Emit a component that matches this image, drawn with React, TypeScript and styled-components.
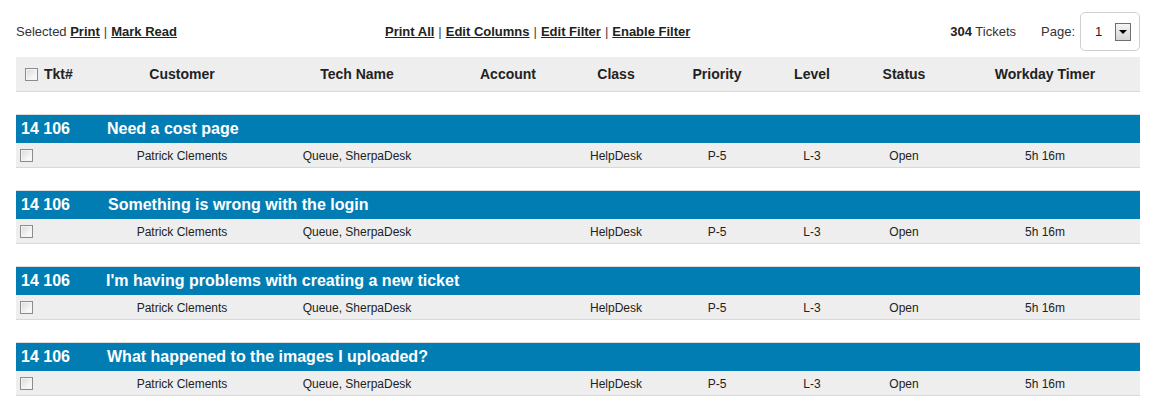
import React from "react";
import styled, { createGlobalStyle } from "styled-components";

const GlobalStyle = createGlobalStyle`
  html, body { margin: 0; padding: 0; background: #fff; }
  body { font-family: "Liberation Sans", Arial, sans-serif; color: #333; }
`;

const Page = styled.div`
  width: 1124px;
  padding: 12px 15px 0 16px;
`;

const TopBar = styled.div`
  display: grid;
  grid-template-columns: 369px auto 1fr;
  align-items: center;
  height: 39px;
  margin-bottom: 6px;
  font-size: 13px;
`;

const Actions = styled.div`
  color: #333;
  white-space: nowrap;
`;

const Link = styled.a`
  color: #222;
  font-weight: bold;
  text-decoration: underline;
  cursor: pointer;
`;

const Sep = styled.span`
  margin: 0 4px;
  color: #444;
`;

const RightBox = styled.div`
  display: flex;
  justify-content: flex-end;
  align-items: center;
`;

const Count = styled.span`
  color: #333;
  margin-right: 25px;
  b { color: #222; }
`;

const PageLabel = styled.span`
  color: #333;
  margin-right: 5px;
`;

const Select = styled.div`
  box-sizing: border-box;
  width: 60px;
  height: 39px;
  border: 1px solid #cfcfcf;
  border-radius: 5px;
  display: flex;
  align-items: center;
  padding-left: 14px;
  color: #222;
`;

const Drop = styled.span`
  box-sizing: border-box;
  margin-left: 13px;
  width: 16px;
  height: 18px;
  border: 1px solid #6f6f6f;
  background: linear-gradient(#f4f4f4, #d6d6d6);
  display: flex;
  align-items: center;
  justify-content: center;
  &::after {
    content: "";
    border-left: 4px solid transparent;
    border-right: 4px solid transparent;
    border-top: 4px solid #000;
  }
`;

const COLS = "86px 160px 190px 112px 104px 98px 92px 92px 190px";

const Header = styled.div`
  display: grid;
  grid-template-columns: ${COLS};
  height: 34px;
  align-items: center;
  background: #eeeeee;
  border-bottom: 1px solid #d8d8d8;
  font-size: 14px;
  font-weight: bold;
  color: #222;
`;

const HeadCell = styled.div<{ $left?: boolean }>`
  display: flex;
  align-items: center;
  justify-content: ${(p) => (p.$left ? "flex-start" : "center")};
  padding-left: ${(p) => (p.$left ? "9px" : "0")};
  gap: 6px;
  white-space: nowrap;
`;

const Check = styled.span`
  box-sizing: border-box;
  display: inline-block;
  width: 13px;
  height: 13px;
  border: 1px solid #8c8c8c;
  background: linear-gradient(135deg, #d8d8d8 0%, #f2f2f2 60%, #ffffff 100%);
  box-shadow: inset 0 0 0 1px #f4f4f4;
`;

const Ticket = styled.div`
  margin-top: 22px;
  border-top: 1px solid #dcdcdc;
  border-bottom: 1px solid #d8d8d8;
`;

const TitleBar = styled.div`
  display: grid;
  grid-template-columns: 86px 1fr;
  align-items: center;
  height: 28px;
  background: #027db4;
  color: #fff;
  font-size: 16px;
  font-weight: bold;
`;

const TitleCell = styled.div<{ $pad: number }>`
  padding-left: ${(p) => p.$pad}px;
  white-space: nowrap;
`;

const DetailRow = styled.div`
  display: grid;
  grid-template-columns: ${COLS};
  align-items: center;
  height: 24px;
  background: #eeeeee;
  font-size: 12px;
  color: #222;
`;

const Cell = styled.div<{ $left?: boolean }>`
  display: flex;
  align-items: center;
  justify-content: ${(p) => (p.$left ? "flex-start" : "center")};
  padding-left: ${(p) => (p.$left ? "4px" : "0")};
  padding-top: 1px;
  white-space: nowrap;
`;

const headers = ["Customer", "Tech Name", "Account", "Class", "Priority", "Level", "Status", "Workday Timer"];

const tickets = [
  { id: "14 106", title: "Need a cost page", pad: 5 },
  { id: "14 106", title: "Something is wrong with the login", pad: 6 },
  { id: "14 106", title: "I'm having problems with creating a new ticket", pad: 4 },
  { id: "14 106", title: "What happened to the images I uploaded?", pad: 5 },
];

export default function App() {
  return (
    <>
      <GlobalStyle />
      <Page>
        <TopBar>
          <Actions>
            Selected <Link>Print</Link>
            <Sep>|</Sep>
            <Link>Mark Read</Link>
          </Actions>
          <Actions>
            <Link>Print All</Link>
            <Sep>|</Sep>
            <Link>Edit Columns</Link>
            <Sep>|</Sep>
            <Link>Edit Filter</Link>
            <Sep>|</Sep>
            <Link>Enable Filter</Link>
          </Actions>
          <RightBox>
            <Count>
              <b>304</b> Tickets
            </Count>
            <PageLabel>Page:</PageLabel>
            <Select>
              1<Drop />
            </Select>
          </RightBox>
        </TopBar>
        <Header>
          <HeadCell $left>
            <Check />
            Tkt#
          </HeadCell>
          {headers.map((h) => (
            <HeadCell key={h}>{h}</HeadCell>
          ))}
        </Header>
        {tickets.map((t, i) => (
          <Ticket key={i}>
            <TitleBar>
              <TitleCell $pad={5}>{t.id}</TitleCell>
              <TitleCell $pad={t.pad}>{t.title}</TitleCell>
            </TitleBar>
            <DetailRow>
              <Cell $left>
                <Check />
              </Cell>
              <Cell>Patrick Clements</Cell>
              <Cell>Queue, SherpaDesk</Cell>
              <Cell></Cell>
              <Cell>HelpDesk</Cell>
              <Cell>P-5</Cell>
              <Cell>L-3</Cell>
              <Cell>Open</Cell>
              <Cell>5h 16m</Cell>
            </DetailRow>
          </Ticket>
        ))}
      </Page>
    </>
  );
}
